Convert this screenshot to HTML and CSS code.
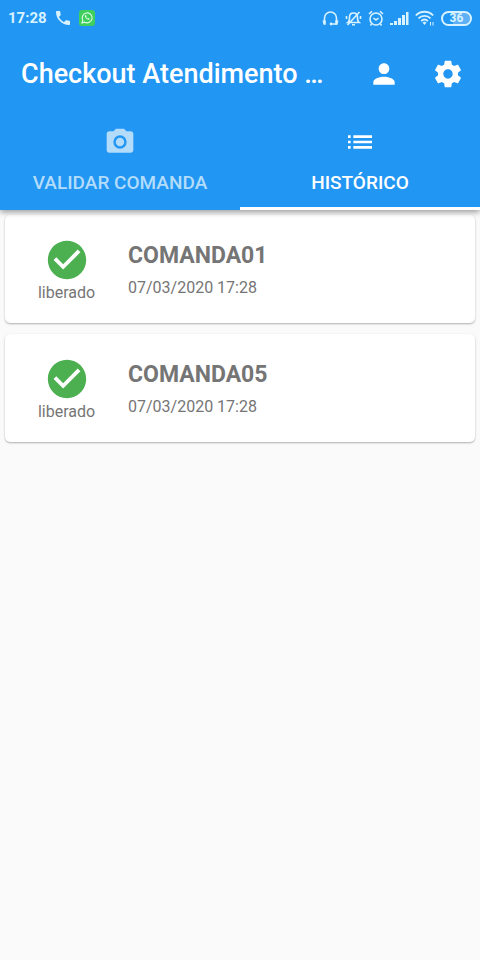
FILE: index.html
```html
<!DOCTYPE html>
<html lang="pt-BR">
<head>
<meta charset="utf-8">
<meta name="viewport" content="width=device-width, initial-scale=1">
<title>Checkout Atendimento</title>
<link rel="stylesheet" href="styles.css">
</head>
<body>
<header class="header">
  <div class="status">
    <span class="clock">17:28</span>
    <svg width="14" height="14" viewBox="3 3 18 18" aria-hidden="true"><path fill="currentColor" d="M6.62 10.79a15.05 15.05 0 0 0 6.59 6.59l2.2-2.2c.27-.27.67-.36 1.02-.24 1.12.37 2.33.57 3.57.57.55 0 1 .45 1 1V20c0 .55-.45 1-1 1C10.61 21 3 13.39 3 4c0-.55.45-1 1-1h3.5c.55 0 1 .45 1 1 0 1.25.2 2.45.57 3.57.11.35.03.74-.25 1.02z"/></svg>
    <svg width="16" height="16" viewBox="0 0 16 16" aria-hidden="true"><rect width="16" height="16" rx="3" fill="#3fcf5c"/><path d="M3 13l.8-2.7A5 5 0 1 1 5.700 12.200z" fill="none" stroke="#e2ffe9" stroke-width="1.100"/><path d="M6 5.300c-1 1.400 2.400 5.200 4.400 4.400l.3-1-1.400-.7-.7.600c-.8-.3-1.200-.9-1.500-1.500l.5-.7-.6-1.300z" fill="#e2ffe9"/></svg>
    <div class="indicators">
      <svg width="17" height="16" viewBox="0 0 17 16" fill="none" stroke="currentColor" aria-hidden="true"><path d="M2.500 12V8a6 6 0 0 1 12 0v4" stroke-width="1.600"/><path d="M.5 10.500h3.300v4.300H1.500zM16.500 10.500h-3.300v4.300h2.300z" fill="currentColor" stroke="none"/><path d="M9 14h6" stroke-width="1.500"/><circle cx="9" cy="14" r="1.400" fill="currentColor" stroke="none"/></svg>
      <svg width="17" height="17" viewBox="0 0 17 17" fill="none" stroke="currentColor" stroke-width="1.600" aria-hidden="true"><path d="M3 12.500c1.500-1 1.500-2.500 1.500-5C4.500 4 6 3 8.500 3s4 1.500 4 4.500.2 4 1.500 5zM7 14.700h3M2.500 15L14.500 2M1.500 6v3M15.500 6v3"/></svg>
      <svg width="16" height="17" viewBox="0 0 16 17" fill="none" stroke="currentColor" stroke-width="1.600" aria-hidden="true"><circle cx="8" cy="9" r="6"/><path d="M5.500 8L8 10l2.500-2M1 4l3-2.700M15 4l-3-2.700M3.500 14l-1 1.500M12.500 14l1 1.500"/></svg>
      <svg width="19" height="15" viewBox="0 0 19 15" fill="currentColor" aria-hidden="true"><path d="M0 12h3v2H0zM4 10h3v4H4zM8 7h3v7H8zM12 4h3v10h-3zM16 1h2.500v13H16z"/></svg>
      <svg width="20" height="16" viewBox="0 0 20 16" fill="none" stroke="currentColor" stroke-width="1.800" aria-hidden="true"><path d="M.8 5.500a12 12 0 0 1 17.400 0M3.500 8.300a8.500 8.500 0 0 1 12 0M6.200 11a5 5 0 0 1 6.600 0"/><path d="M7.500 12.500L9.500 15l2-2.500q-2-1.500-4 0z" fill="currentColor" stroke="none"/><path d="M15.500 12v3.500M18 12v3.500" stroke-width="1"/></svg>
      <span class="battery">36</span>
    </div>
  </div>
  <div class="toolbar">
    <h1 class="title">Checkout Atendimento …</h1>
    <button class="action" type="button" aria-label="Perfil"><svg width="32" height="32" viewBox="0 0 24 24" aria-hidden="true"><path fill="currentColor" d="M12 12c2.210 0 4-1.790 4-4s-1.790-4-4-4-4 1.790-4 4 1.790 4 4 4zm0 2c-2.670 0-8 1.340-8 4v2h16v-2c0-2.660-5.330-4-8-4z"/></svg></button>
    <button class="action" type="button" aria-label="Configurações"><svg width="32" height="32" viewBox="0 0 24 24" aria-hidden="true"><path fill="currentColor" d="M19.430 12.980c.04-.32.07-.64.07-.98s-.03-.66-.07-.98l2.110-1.650c.19-.15.24-.42.12-.64l-2-3.460c-.12-.22-.39-.3-.61-.22l-2.490 1c-.52-.4-1.080-.73-1.690-.98l-.38-2.650C14.460 2.180 14.250 2 14 2h-4c-.25 0-.46.18-.49.42l-.38 2.650c-.61.25-1.170.59-1.690.98l-2.490-1c-.23-.09-.49 0-.61.22l-2 3.460c-.13.22-.07.49.12.64l2.110 1.650c-.04.32-.07.65-.07.98s.03.66.07.98l-2.110 1.650c-.19.15-.24.42-.12.64l2 3.460c.12.22.39.3.61.22l2.490-1c.52.4 1.080.73 1.690.98l.38 2.650c.03.24.24.42.49.42h4c.25 0 .46-.18.49-.42l.38-2.650c.61-.25 1.170-.59 1.690-.98l2.490 1c.23.09.49 0 .61-.22l2-3.460c.12-.22.07-.49-.12-.64zM12 15.500c-1.930 0-3.500-1.570-3.500-3.500s1.570-3.500 3.500-3.500 3.500 1.570 3.500 3.500-1.570 3.500-3.500 3.500z"/></svg></button>
  </div>
  <nav class="tabs">
    <button class="tab" type="button"><svg width="32" height="32" viewBox="0 0 24 24" aria-hidden="true"><path fill="currentColor" fill-rule="evenodd" d="M9 2L7.170 4H4c-1.100 0-2 .9-2 2v12c0 1.100.9 2 2 2h16c1.100 0 2-.9 2-2V6c0-1.100-.9-2-2-2h-3.170L15 2zM12 17a5 5 0 1 1 0-10 5 5 0 0 1 0 10z"/><circle cx="12" cy="12" r="3.200" fill="currentColor"/></svg>VALIDAR COMANDA</button>
    <button class="tab active" type="button"><svg width="32" height="32" viewBox="0 0 24 24" aria-hidden="true"><path fill="currentColor" d="M3 13h2v-2H3zm0 4h2v-2H3zm0-8h2V7H3zm4 4h14v-2H7zm0 4h14v-2H7zM7 7v2h14V7z"/></svg>HISTÓRICO</button>
  </nav>
</header>
<main class="list">
  <article class="card">
    <div class="state"><svg width="46" height="46" viewBox="0 0 24 24" aria-hidden="true"><path fill="currentColor" d="M12 2C6.480 2 2 6.480 2 12s4.480 10 10 10 10-4.480 10-10S17.520 2 12 2zm-2 15l-5-5 1.410-1.410L10 14.170l7.590-7.590L19 8z"/></svg><span>liberado</span></div>
    <div class="info"><h2>COMANDA01</h2><time datetime="2020-03-07T17:28">07/03/2020 17:28</time></div>
  </article>
  <article class="card">
    <div class="state"><svg width="46" height="46" viewBox="0 0 24 24" aria-hidden="true"><path fill="currentColor" d="M12 2C6.480 2 2 6.480 2 12s4.480 10 10 10 10-4.480 10-10S17.520 2 12 2zm-2 15l-5-5 1.410-1.410L10 14.170l7.590-7.590L19 8z"/></svg><span>liberado</span></div>
    <div class="info"><h2>COMANDA05</h2><time datetime="2020-03-07T17:28">07/03/2020 17:28</time></div>
  </article>
</main>
</body>
</html>
```
FILE: styles.css
```css
* { box-sizing: border-box; }
body {
  margin: 0;
  background: #fafafa;
  color: #757575;
  font-family: Roboto, sans-serif;
}
svg { display: block; flex: none; }
button {
  border: 0;
  padding: 0;
  background: none;
  color: inherit;
  font: inherit;
}
.header {
  position: relative;
  background: #2196f3;
  color: #fff;
  box-shadow: 0 2px 6px rgba(0, 0, 0, .4);
}
.status {
  display: flex;
  align-items: center;
  gap: 9px;
  height: 36px;
  padding: 0 8px;
  color: #d8f3ff;
}
.clock { font-size: 15px; font-weight: 700; }
.indicators {
  display: flex;
  align-items: center;
  gap: 6px;
  margin-left: auto;
}
.battery {
  width: 31px;
  border: 2px solid #d8f3ff;
  border-radius: 8px;
  font-size: 12px;
  font-weight: 700;
  line-height: 11px;
  text-align: center;
  background: linear-gradient(90deg, #2196f3 36%, #5fb0f4 36%) padding-box;
}
.toolbar {
  display: flex;
  align-items: center;
  height: 76px;
  padding-left: 21px;
}
.title {
  flex: 1;
  min-width: 0;
  margin: 0;
  overflow: hidden;
  white-space: nowrap;
  text-overflow: ellipsis;
  font-size: 27px;
  font-weight: 500;
  line-height: 34px;
}
.action {
  display: grid;
  place-items: center;
  width: 64px;
  height: 64px;
}
.tabs { display: flex; }
.tab {
  flex: 1;
  display: flex;
  flex-direction: column;
  align-items: center;
  gap: 14px;
  height: 98px;
  padding-top: 14px;
  border-bottom: 3px solid transparent;
  color: #b3dcfb;
  font-size: 19px;
  font-weight: 500;
  line-height: 22px;
}
.active { border-color: #fff; color: #fff; }
.list {
  display: grid;
  gap: 11px;
  padding: 5px;
}
.card {
  display: flex;
  align-items: center;
  height: 108px;
  padding-top: 2px;
  border-radius: 5px;
  background: #fff;
  box-shadow: 0 1px 2px rgba(0, 0, 0, .3);
}
.state {
  display: flex;
  flex-direction: column;
  align-items: center;
  width: 123px;
  font-size: 16px;
  line-height: 20px;
}
.state svg { color: #4caf50; }
.info { flex: 1; }
.info h2 {
  margin: 0 0 8px;
  font-size: 23px;
  font-weight: 700;
  line-height: 28px;
}
.info time {
  display: block;
  font-size: 16px;
  line-height: 20px;
}
```
